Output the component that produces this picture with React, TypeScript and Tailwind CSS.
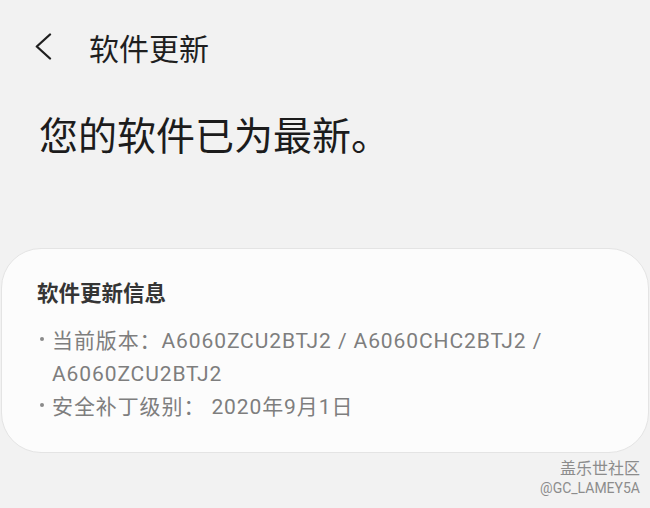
const ITEMS = [
  "当前版本：A6060ZCU2BTJ2 / A6060CHC2BTJ2 / A6060ZCU2BTJ2",
  "安全补丁级别： 2020年9月1日",
];

const App = () => {
  return (
    <div className="w-[650px] h-[508px] overflow-hidden bg-[#f2f2f2] font-['Roboto','Noto_Sans_CJK_SC',sans-serif]">
      {/* Top bar */}
      <div className="flex items-start pt-[32px] pl-[35px]">
        <svg width="17" height="27" viewBox="0 0 17 27" fill="none" className="mt-[1px]">
          <polyline
            points="15,1.5 1.8,13.5 15,25.5"
            stroke="#1f1f1f"
            strokeWidth="2.3"
            strokeLinecap="round"
            strokeLinejoin="round"
          />
        </svg>
        <h1 className="ml-[37px] text-[30px] leading-[30px] text-[#1f1f1f] font-['Noto_Sans_CJK_SC',sans-serif]">
          软件更新
        </h1>
      </div>

      {/* Status */}
      <p className="mt-[51px] pl-[39px] text-[39px] leading-[48px] text-[#1c1c1c]">
        您的软件已为最新。
      </p>

      {/* Info card */}
      <div className="mt-[87px] ml-[1px] w-[648px] rounded-[40px] border border-[#e4e4e4] bg-[#fcfcfc] pt-[31px] pb-[28px] pl-[35px] pr-[30px]">
        <h2 className="text-[21.5px] leading-[28px] font-bold text-[#353535]">软件更新信息</h2>
        <ul className="mt-[17px]">
          {ITEMS.map((item) => (
            <li key={item} className="flex text-[21px] leading-[33px] tracking-[0.9px] text-[#7e7e7e]">
              <span className="w-[15px] shrink-0 pt-[12px] pl-[3px]">
                <span className="block w-[4px] h-[4px] rounded-full bg-[#8a8a8a]" />
              </span>
              <p>{item}</p>
            </li>
          ))}
        </ul>
      </div>

      {/* Watermark */}
      <div className="mt-[3px] pr-[10px] flex flex-col items-end text-[#8c8c8c]">
        <span className="text-[16px] leading-[22px] font-['Noto_Sans_CJK_SC',sans-serif]">盖乐世社区</span>
        <span className="text-[14px] leading-[20px]">@GC_LAMEY5A</span>
      </div>
    </div>
  );
};

export default App;
